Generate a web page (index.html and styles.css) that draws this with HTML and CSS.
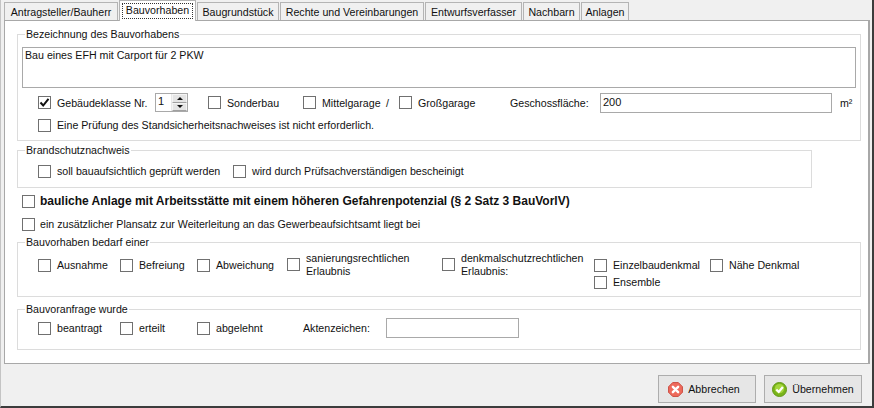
FILE: index.html
```html
<!DOCTYPE html>
<html lang="de">
<head>
    <meta charset="UTF-8">
    <title>Bauvorhaben</title>
    <link rel="stylesheet" href="styles.css">
</head>
<body>
    <div class="window">
        <div class="tabs">
            <div class="tab w-tab1">Antragsteller/Bauherr</div>
            <div class="tab active w-tab2"><span class="focus">Bauvorhaben</span></div>
            <div class="tab w-tab3">Baugrundstück</div>
            <div class="tab w-tab4">Rechte und Vereinbarungen</div>
            <div class="tab w-tab5">Entwurfsverfasser</div>
            <div class="tab w-tab6">Nachbarn</div>
            <div class="tab w-tab7">Anlagen</div>
        </div>

        <div class="panel">
            <fieldset class="group group-main">
                <legend>Bezeichnung des Bauvorhabens</legend>
                <div class="memo">Bau eines EFH mit Carport für 2 PKW</div>
                <div class="row row-first">
                    <label class="check w-117"><span class="box checked"><svg viewBox="0 0 11 11" width="11" height="11"><path d="M1.5 5.5 L4.2 8.5 L9.5 1.8" fill="none" stroke="#111" stroke-width="2"/></svg></span>Gebäudeklasse Nr.</label>
                    <div class="spinner">
                        <span class="spinner-value">1</span>
                        <span class="spinner-btns">
                            <span class="spin-btn"><i class="arrow-up"></i></span>
                            <span class="spin-btn"><i class="arrow-down"></i></span>
                        </span>
                    </div>
                    <label class="check ml-20 w-95"><span class="box"></span>Sonderbau</label>
                    <label class="check w-83"><span class="box"></span>Mittelgarage</label>
                    <span class="slash">/</span>
                    <label class="check w-111"><span class="box"></span>Großgarage</label>
                    <span class="field-label">Geschossfläche:</span>
                    <div class="input input-area">200</div>
                    <span class="unit">m²</span>
                </div>
                <div class="row row-second">
                    <label class="check"><span class="box"></span>Eine Prüfung des Standsicherheitsnachweises ist nicht erforderlich.</label>
                </div>
            </fieldset>

            <fieldset class="group group-fire">
                <legend>Brandschutznachweis</legend>
                <div class="row">
                    <label class="check w-195"><span class="box"></span>soll bauaufsichtlich geprüft werden</label>
                    <label class="check"><span class="box"></span>wird durch Prüfsachverständigen bescheinigt</label>
                </div>
            </fieldset>

            <div class="row-plain row-bold">
                <label class="check bold"><span class="box"></span>bauliche Anlage mit Arbeitsstätte mit einem höheren Gefahrenpotenzial (§ 2 Satz 3 BauVorlV)</label>
            </div>
            <div class="row-plain row-extra">
                <label class="check"><span class="box"></span>ein zusätzlicher Plansatz zur Weiterleitung an das Gewerbeaufsichtsamt liegt bei</label>
            </div>

            <fieldset class="group group-need">
                <legend>Bauvorhaben bedarf einer</legend>
                <div class="row row-top">
                    <label class="check w-82"><span class="box"></span>Ausnahme</label>
                    <label class="check w-77"><span class="box"></span>Befreiung</label>
                    <label class="check w-90"><span class="box"></span>Abweichung</label>
                    <label class="check two-line w-155"><span class="box"></span><span>sanierungsrechtlichen<br>Erlaubnis</span></label>
                    <label class="check two-line w-152"><span class="box"></span><span>denkmalschutzrechtlichen<br>Erlaubnis:</span></label>
                    <div class="monument">
                        <label class="check w-116"><span class="box"></span>Einzelbaudenkmal</label>
                        <label class="check"><span class="box"></span>Nähe Denkmal</label>
                        <label class="check w-full"><span class="box"></span>Ensemble</label>
                    </div>
                </div>
            </fieldset>

            <fieldset class="group group-request">
                <legend>Bauvoranfrage wurde</legend>
                <div class="row">
                    <label class="check w-82"><span class="box"></span>beantragt</label>
                    <label class="check w-77"><span class="box"></span>erteilt</label>
                    <label class="check w-106"><span class="box"></span>abgelehnt</label>
                    <span class="file-label">Aktenzeichen:</span>
                    <div class="input input-file"></div>
                </div>
            </fieldset>
        </div>

        <div class="footer">
            <div class="btn btn-cancel">
                <svg viewBox="0 0 16 16" width="15" height="15">
                    <path d="M5 .6 H11 L15.4 5 V11 L11 15.4 H5 L.6 11 V5 Z" fill="#ee6a5c" stroke="#c9493e"/>
                    <path d="M5.2 5.2 L10.8 10.8 M10.8 5.2 L5.2 10.8" stroke="#fff" stroke-width="2.6" stroke-linecap="round"/>
                </svg>
                Abbrechen
            </div>
            <div class="btn">
                <svg viewBox="0 0 16 16" width="15" height="15">
                    <circle cx="8" cy="8" r="7.5" fill="#79b31a" stroke="#5f9612"/>
                    <circle cx="8" cy="7" r="5" fill="#a4d63c"/>
                    <path d="M4.6 8 L7.2 10.6 L11.6 5.4" fill="none" stroke="#fff" stroke-width="2.4"/>
                </svg>
                Übernehmen
            </div>
        </div>
    </div>
</body>
</html>
```

FILE: styles.css
```css
* {
    margin: 0;
    padding: 0;
    box-sizing: border-box;
}

html, body {
    width: 874px;
    height: 408px;
    overflow: hidden;
}

body {
    font-family: "Liberation Sans", Arial, sans-serif;
    font-size: 10.65px;
    color: #111;
    background: #f0f0f0;
}

.window {
    width: 874px;
    height: 408px;
    border-left: 1px solid #c4c4c4;
    border-right: 2px solid #3c3c3c;
    border-bottom: 2px solid #3c3c3c;
    padding-left: 3px;
}

/* tabs */
.tabs {
    display: flex;
    height: 20px;
    align-items: flex-end;
}

.tab {
    height: 18px;
    line-height: 18px;
    text-align: center;
    background: #f0f0f0;
    border: 1px solid #b4b4b4;
    border-bottom: none;
    margin-right: 1px;
    white-space: nowrap;
}

.tab.active {
    height: 21px;
    margin-bottom: -1px;
    background: #fff;
    position: relative;
    z-index: 2;
    padding: 2px 2px 0;
}

.focus {
    display: block;
    height: 16px;
    line-height: 13px;
    border: 1px dotted #333;
}

.w-tab1 { width: 114px; }
.w-tab2 { width: 77px; }
.w-tab3 { width: 82px; }
.w-tab4 { width: 144px; }
.w-tab5 { width: 97px; }
.w-tab6 { width: 57px; }
.w-tab7 { width: 48px; }

.panel {
    width: 866px;
    height: 344px;
    background: #fff;
    border: 1px solid #a8a8a8;
    border-width: 1px 2px 1px 1px;
    padding: 6px 0 0 12px;
}

/* group boxes */
.group {
    border: 1px solid #dcdcdc;
    padding: 0 4px;
    min-width: 0;
}

.group legend {
    margin-left: 3px;
    padding: 0 1px;
    line-height: 14px;
    height: 14px;
}

.group-main {
    width: 844px;
    height: 114px;
}

.group-fire {
    width: 795px;
    height: 45px;
    margin-top: 2px;
}

.group-need {
    width: 844px;
    height: 62px;
    margin-top: 4px;
}

.group-request {
    width: 844px;
    height: 48px;
    margin-top: 5px;
}

.memo {
    height: 41px;
    margin-top: 6px;
    padding: 1px 2px;
    border: 1px solid #a9a9a9;
}

.row {
    display: flex;
    align-items: center;
    padding-left: 16px;
    height: 14px;
}

.group-fire .row {
    margin-top: 7px;
}

.row-first {
    height: 19px;
    margin-top: 5px;
}

.row-second {
    margin-top: 6px;
}

.row-top {
    align-items: flex-start;
    margin-top: 9px;
    height: auto;
}

.group-request .row {
    margin-top: 2px;
    height: 20px;
}

.row-plain {
    padding-left: 5px;
    height: 14px;
}

.row-bold {
    margin-top: 6px;
}

.row-extra {
    margin-top: 9px;
}

/* checkboxes */
.check {
    display: flex;
    align-items: center;
    white-space: nowrap;
    height: 14px;
}

.box {
    flex: none;
    display: flex;
    align-items: center;
    justify-content: center;
    width: 13px;
    height: 13px;
    margin-right: 6px;
    border: 1px solid #707070;
    background: #fff;
}

.bold {
    font-size: 12px;
    font-weight: bold;
}

.bold .box {
    margin-right: 5px;
}

.row-extra .box {
    margin-right: 5px;
}

.two-line {
    align-items: flex-start;
    height: 28px;
    line-height: 13px;
}

.two-line > span:last-child {
    margin-top: -6px;
}

.w-full { width: 100%; margin-top: 3px; }
.w-82 { width: 82px; }
.w-77 { width: 77px; }
.w-90 { width: 90px; }
.w-95 { width: 95px; }
.w-83 { width: 83px; }
.w-106 { width: 106px; }
.w-111 { width: 111px; }
.w-116 { width: 116px; }
.w-117 { width: 117px; }
.w-152 { width: 152px; }
.w-155 { width: 155px; }
.w-195 { width: 195px; }
.ml-20 { margin-left: 20px; }

.slash {
    width: 13px;
}

.monument {
    display: flex;
    flex-wrap: wrap;
    width: 240px;
}

/* inputs */
.spinner {
    display: flex;
    width: 33px;
    height: 19px;
    border: 1px solid #a9a9a9;
    background: #fff;
}

.spinner-value {
    flex: 1;
    padding-left: 2px;
    font-size: 11px;
    line-height: 15px;
}

.spinner-btns {
    width: 16px;
    display: flex;
    flex-direction: column;
    border-left: 1px solid #e8e8e8;
}

.spin-btn {
    flex: 1;
    display: flex;
    align-items: center;
    justify-content: center;
    background: #e4e4e4;
    border: 1px solid #f4f4f4;
    border-bottom-color: #a0a0a0;
}

.arrow-up {
    width: 0;
    height: 0;
    border: 3px solid transparent;
    border-top: none;
    border-bottom: 3px solid #111;
}

.arrow-down {
    width: 0;
    height: 0;
    border: 3px solid transparent;
    border-bottom: none;
    border-top: 3px solid #111;
}

.field-label {
    width: 90px;
}

.input {
    border: 1px solid #a9a9a9;
    background: #fff;
    padding: 1px 2px;
}

.input-area {
    width: 232px;
    height: 20px;
    flex: none;
    font-size: 11px;
    line-height: 15px;
}

.unit {
    margin-left: 8px;
}

.file-label {
    width: 83px;
}

.input-file {
    width: 133px;
    height: 20px;
}

/* bottom buttons */
.footer {
    display: flex;
    justify-content: flex-end;
    gap: 8px;
    padding: 11px 10px 0 0;
}

.btn {
    display: flex;
    align-items: center;
    justify-content: center;
    gap: 5px;
    width: 98px;
    height: 28px;
    border: 1px solid #adadad;
    background: #e6e6e6;
}

.btn-cancel {
    padding-right: 6px;
}
```
